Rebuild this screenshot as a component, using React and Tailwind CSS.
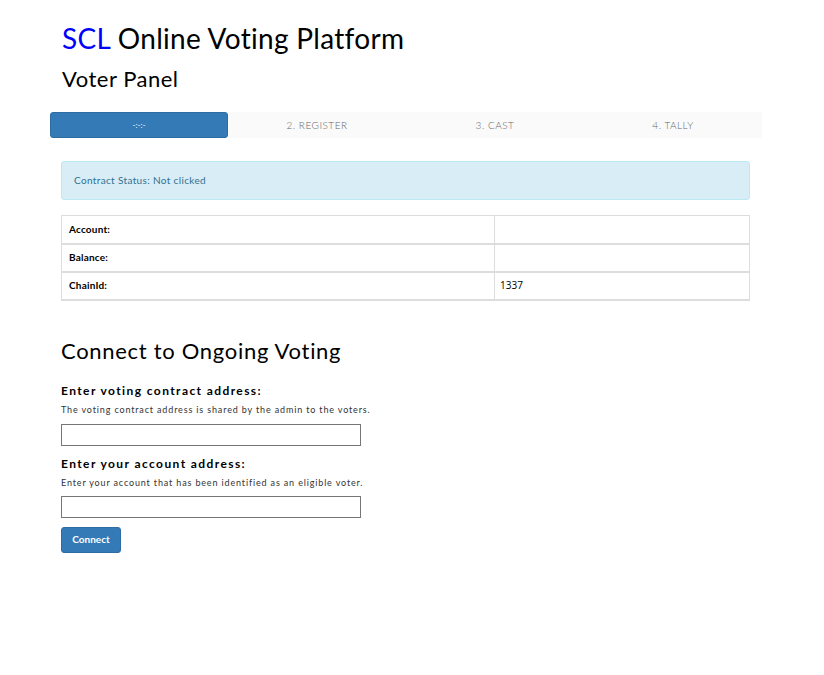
import React from 'react'

const font = { fontFamily: '"Lato", "Open Sans", sans-serif' }

const steps = ['-:-:-', '2. REGISTER', '3. CAST', '4. TALLY']

function InfoTable() {
  const rows = [
    ['Account:', ''],
    ['Balance:', ''],
    ['ChainId:', '1337'],
  ]
  return (
    <table className="w-[689px] border-collapse border border-[#ddd] text-[10px] text-black">
      <tbody>
        {rows.map(([label, value]) => (
          <tr key={label} className="h-[28px] border-b-2 border-[#ddd]">
            <td className="w-[433px] border-r border-[#ddd] px-[7px] font-bold tracking-[0.2px]">{label}</td>
            <td className="px-[5px]" style={{ fontFamily: '"Open Sans", sans-serif' }}>{value}</td>
          </tr>
        ))}
      </tbody>
    </table>
  )
}

export default function App() {
  return (
    <div className="min-h-[675px] bg-white text-black" style={font}>
      <div className="pl-[62px] pt-[20px]">
        <h1 className="text-[28px] leading-[36px] tracking-[0.3px]">
          <span className="text-[#0000ff]">SCL</span> Online Voting Platform
        </h1>
        <h2 className="mt-[8px] text-[22px] leading-[30px] tracking-[0.5px]">Voter Panel</h2>
      </div>

      {/* Steps */}
      <div className="ml-[50px] mt-[18px] flex w-[712px] bg-[#fafafa]">
        {steps.map((s, i) => (
          <div
            key={s}
            className={
              i === 0
                ? 'flex h-[26px] w-[178px] items-center justify-center rounded-[3px] border border-[#2e6da4] bg-[#337ab7] text-[8px] text-white'
                : 'flex h-[26px] w-[178px] items-center justify-center text-[10px] font-light tracking-[0.5px] text-[#666]'
            }
          >
            {s}
          </div>
        ))}
      </div>

      <div className="ml-[61px] mt-[23px]">
        <div className="flex h-[39px] w-[689px] items-center rounded-[3px] border border-[#bce8f1] bg-[#d9edf7] px-[12px] text-[10px] tracking-[0.35px] text-[#31708f]">
          Contract Status: Not clicked
        </div>

        <div className="mt-[15px]">
          <InfoTable />
        </div>

        <h3 className="mt-[35px] text-[22px] leading-[30px] tracking-[0.7px]">Connect to Ongoing Voting</h3>

        <div className="mt-[17px] flex flex-col">
          <label className="text-[12px] font-bold leading-[16px] tracking-[1.4px]">Enter voting contract address:</label>
          <p className="mt-[5px] text-[9px] leading-[12px] tracking-[0.85px] text-[#333]">
            The voting contract address is shared by the admin to the voters.
          </p>
          <input className="mt-[8px] h-[22px] w-[300px] border border-[#767676] outline-none" />

          <label className="mt-[10px] text-[12px] font-bold leading-[16px] tracking-[1.4px]">Enter your account address:</label>
          <p className="mt-[5px] text-[9px] leading-[12px] tracking-[0.85px] text-[#333]">
            Enter your account that has been identified as an eligible voter.
          </p>
          <input className="mt-[7px] h-[22px] w-[300px] border border-[#767676] outline-none" />

          <button className="mt-[9px] h-[26px] w-[60px] rounded-[3px] border border-[#2e6da4] bg-[#337ab7] text-[10px] font-bold text-white">
            Connect
          </button>
        </div>
      </div>
    </div>
  )
}
